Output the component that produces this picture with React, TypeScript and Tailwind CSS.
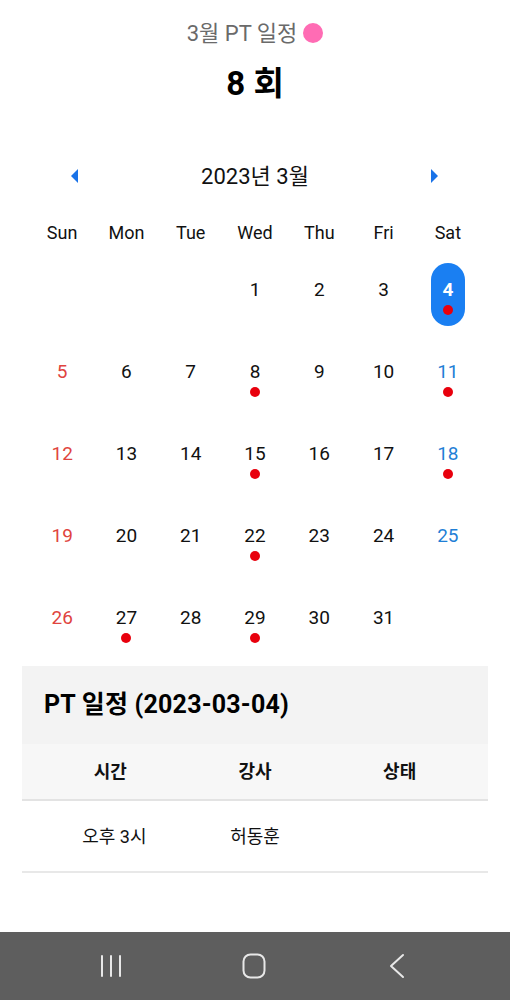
import React from "react";

const font = { fontFamily: 'Roboto, "Noto Sans CJK KR", "Noto Sans", sans-serif' };

const weekdays = ["Sun", "Mon", "Tue", "Wed", "Thu", "Fri", "Sat"];
const dots = new Set([4, 8, 11, 15, 18, 22, 27, 29]);

function buildWeeks() {
  const cells: (number | null)[] = [null, null, null];
  for (let d = 1; d <= 31; d++) cells.push(d);
  while (cells.length % 7) cells.push(null);
  const weeks: (number | null)[][] = [];
  for (let i = 0; i < cells.length; i += 7) weeks.push(cells.slice(i, i + 7));
  return weeks;
}

export default function App() {
  const weeks = buildWeeks();
  return (
    <div className="w-[510px] h-[1000px] bg-white flex flex-col overflow-hidden" style={font}>
      <div className="flex flex-col items-center pt-[18px]">
        <div className="h-[30px] flex items-center gap-[6px]">
          <span className="text-[22px] text-[#6a6a6a]">3월 PT 일정</span>
          <span className="w-[20px] h-[20px] rounded-full bg-[#ff6cb4]" />
        </div>
        <div className="mt-[16px] h-[40px] flex items-center text-[33px] font-bold text-black">8 회</div>
      </div>

      <div className="mx-[30px] mt-[57px]">
        <div className="h-[30px] flex items-center justify-between px-[41px]">
          <svg width="8" height="14" viewBox="0 0 8 14"><polygon points="7,0 7,14 0,7" fill="#1a73e8" /></svg>
          <span className="text-[22px] text-[#111]">2023년 3월</span>
          <svg width="8" height="14" viewBox="0 0 8 14"><polygon points="0,0 0,14 7,7" fill="#1a73e8" /></svg>
        </div>
        <div className="grid grid-cols-7 mt-[28px] h-[24px]">
          {weekdays.map((w) => (
            <div key={w} className="flex items-center justify-center text-[18px] text-[#111]">{w}</div>
          ))}
        </div>
        <div className="mt-[6px]">
          {weeks.map((wk, wi) => (
            <div key={wi} className="grid grid-cols-7 h-[82px]">
              {wk.map((d, di) => {
                const selected = d === 4;
                const color = selected
                  ? "text-white font-bold"
                  : di === 0
                  ? "text-[#e0443e]"
                  : di === 6
                  ? "text-[#1f7fd6]"
                  : "text-[#111]";
                return (
                  <div key={di} className="flex justify-center pt-[14px]">
                    {d !== null && (
                      <div
                        className={`w-[34px] h-[63px] rounded-full flex flex-col items-center pt-[15px] ${
                          selected ? "bg-[#1a7ff2]" : ""
                        }`}
                      >
                        <div className={`h-[24px] flex items-center text-[19px] ${color}`}>{d}</div>
                        {dots.has(d) && <div className="mt-[3px] w-[10px] h-[10px] rounded-full bg-[#e8000d]" />}
                      </div>
                    )}
                  </div>
                );
              })}
            </div>
          ))}
        </div>
      </div>

      <div className="mx-[22px] mt-[7px]">
        <div className="h-[78px] bg-[#f3f3f3] flex items-center pl-[22px]">
          <span className="text-[25px] font-bold text-black tracking-[0.2px]">PT 일정 (2023-03-04)</span>
        </div>
        <div className="h-[57px] bg-[#f7f7f7] border-b-2 border-[#e3e3e3] grid grid-cols-3 px-[16px]">
          {["시간", "강사", "상태"].map((h) => (
            <div key={h} className="flex items-center justify-center text-[18px] font-bold text-[#111]">{h}</div>
          ))}
        </div>
        <div className="h-[72px] border-b-2 border-[#e8e8e8] grid grid-cols-3 px-[16px]">
          <div className="flex items-center justify-center text-[18px] text-[#111] pl-[8px]">오후 3시</div>
          <div className="flex items-center justify-center text-[18px] text-[#111]">허동훈</div>
          <div />
        </div>
      </div>

      <div className="mt-auto h-[68px] bg-[#5e5e5e] grid grid-cols-3 pl-[39px] pr-[42px]">
        <div className="flex items-center justify-center">
          <svg width="22" height="24" viewBox="0 0 22 24" fill="none" stroke="#e8e8e8" strokeWidth="2" strokeLinecap="round">
            <line x1="2" y1="2" x2="2" y2="22" />
            <line x1="11" y1="2" x2="11" y2="22" />
            <line x1="20" y1="2" x2="20" y2="22" />
          </svg>
        </div>
        <div className="flex items-center justify-center">
          <svg width="24" height="26" viewBox="0 0 24 26" fill="none" stroke="#e8e8e8" strokeWidth="2">
            <rect x="1.5" y="1.5" width="21" height="23" rx="7" />
          </svg>
        </div>
        <div className="flex items-center justify-center">
          <svg width="16" height="26" viewBox="0 0 16 26" fill="none" stroke="#e8e8e8" strokeWidth="2" strokeLinecap="round" strokeLinejoin="round">
            <polyline points="14,2 2,13 14,24" />
          </svg>
        </div>
      </div>
    </div>
  );
}
